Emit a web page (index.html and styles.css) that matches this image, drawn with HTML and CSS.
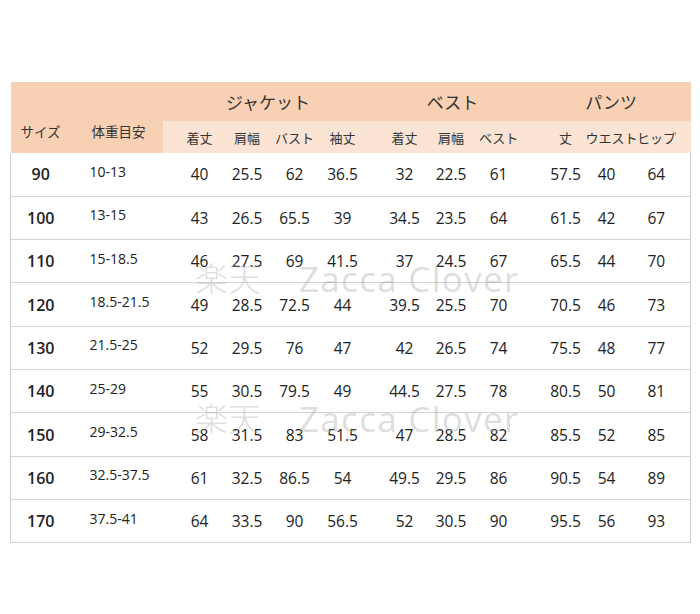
FILE: index.html
```html
<!DOCTYPE html>
<html lang="ja">
<head>
<meta charset="utf-8">
<link rel="stylesheet" href="styles.css">
</head>
<body>
<div class="wrap">
<table class="size-table">
  <colgroup>
    <col class="w-size"><col class="w-weight">
    <col class="w-j1"><col class="w-j2"><col class="w-j3"><col class="w-j4">
    <col class="w-v1"><col class="w-v2"><col class="w-v3">
    <col class="w-p1"><col class="w-p2"><col class="w-p3">
  </colgroup>
  <thead>
    <tr class="group-row">
      <th rowspan="2" class="corner c1">サイズ</th>
      <th rowspan="2" class="corner c2">体重目安</th>
      <th colspan="4" class="group">ジャケット</th>
      <th colspan="3" class="group">ベスト</th>
      <th colspan="3" class="group">パンツ</th>
    </tr>
    <tr class="sub-row">
      <th class="c3">着丈</th><th class="c4">肩幅</th><th class="c5">バスト</th><th class="c6">袖丈</th>
      <th class="c7">着丈</th><th class="c8">肩幅</th><th class="c9">ベスト</th>
      <th class="c10">丈</th><th class="c11">ウエスト</th><th class="c12">ヒップ</th>
    </tr>
  </thead>
  <tbody>
    <tr><td class="c1">90</td><td class="c2">10-13</td><td class="c3">40</td><td class="c4">25.5</td><td class="c5">62</td><td class="c6">36.5</td><td class="c7">32</td><td class="c8">22.5</td><td class="c9">61</td><td class="c10">57.5</td><td class="c11">40</td><td class="c12">64</td></tr>
    <tr><td class="c1">100</td><td class="c2">13-15</td><td class="c3">43</td><td class="c4">26.5</td><td class="c5">65.5</td><td class="c6">39</td><td class="c7">34.5</td><td class="c8">23.5</td><td class="c9">64</td><td class="c10">61.5</td><td class="c11">42</td><td class="c12">67</td></tr>
    <tr><td class="c1">110</td><td class="c2">15-18.5</td><td class="c3">46</td><td class="c4">27.5</td><td class="c5">69</td><td class="c6">41.5</td><td class="c7">37</td><td class="c8">24.5</td><td class="c9">67</td><td class="c10">65.5</td><td class="c11">44</td><td class="c12">70</td></tr>
    <tr><td class="c1">120</td><td class="c2">18.5-21.5</td><td class="c3">49</td><td class="c4">28.5</td><td class="c5">72.5</td><td class="c6">44</td><td class="c7">39.5</td><td class="c8">25.5</td><td class="c9">70</td><td class="c10">70.5</td><td class="c11">46</td><td class="c12">73</td></tr>
    <tr><td class="c1">130</td><td class="c2">21.5-25</td><td class="c3">52</td><td class="c4">29.5</td><td class="c5">76</td><td class="c6">47</td><td class="c7">42</td><td class="c8">26.5</td><td class="c9">74</td><td class="c10">75.5</td><td class="c11">48</td><td class="c12">77</td></tr>
    <tr><td class="c1">140</td><td class="c2">25-29</td><td class="c3">55</td><td class="c4">30.5</td><td class="c5">79.5</td><td class="c6">49</td><td class="c7">44.5</td><td class="c8">27.5</td><td class="c9">78</td><td class="c10">80.5</td><td class="c11">50</td><td class="c12">81</td></tr>
    <tr><td class="c1">150</td><td class="c2">29-32.5</td><td class="c3">58</td><td class="c4">31.5</td><td class="c5">83</td><td class="c6">51.5</td><td class="c7">47</td><td class="c8">28.5</td><td class="c9">82</td><td class="c10">85.5</td><td class="c11">52</td><td class="c12">85</td></tr>
    <tr><td class="c1">160</td><td class="c2">32.5-37.5</td><td class="c3">61</td><td class="c4">32.5</td><td class="c5">86.5</td><td class="c6">54</td><td class="c7">49.5</td><td class="c8">29.5</td><td class="c9">86</td><td class="c10">90.5</td><td class="c11">54</td><td class="c12">89</td></tr>
    <tr><td class="c1">170</td><td class="c2">37.5-41</td><td class="c3">64</td><td class="c4">33.5</td><td class="c5">90</td><td class="c6">56.5</td><td class="c7">52</td><td class="c8">30.5</td><td class="c9">90</td><td class="c10">95.5</td><td class="c11">56</td><td class="c12">93</td></tr>
  </tbody>
</table>
<div class="watermark wm1"><span class="wm-jp">楽天</span><span class="wm-en">Zacca Clover</span></div>
<div class="watermark wm2"><span class="wm-jp">楽天</span><span class="wm-en">Zacca Clover</span></div>
</div>
</body>
</html>
```
FILE: styles.css
```css
html, body {
  margin: 0;
  padding: 0;
  background: #ffffff;
}
body {
  width: 700px;
  height: 614px;
  overflow: hidden;
  font-family: "Open Sans", "Noto Sans CJK JP", sans-serif;
  color: #222;
}
.wrap {
  position: relative;
  padding: 82px 0 0 10px;
}
.size-table {
  border-collapse: collapse;
  table-layout: fixed;
  width: 680px;
}
.w-size { width: 60px; }
.w-weight { width: 92px; }
.w-j1 { width: 61px; }
.w-j2 { width: 47px; }
.w-j3 { width: 48px; }
.w-j4 { width: 55px; }
.w-v1 { width: 54px; }
.w-v2 { width: 47px; }
.w-v3 { width: 57px; }
.w-p1 { width: 54px; }
.w-p2 { width: 46px; }
.w-p3 { width: 59px; }

th {
  font-family: "Noto Sans CJK JP", sans-serif;
  font-weight: 400;
  color: #333;
  padding: 0;
  white-space: nowrap;
}
.group-row { height: 39px; }
.group-row th { background: #f8d0b3; }
.group {
  font-size: 17px;
  text-align: center;
  vertical-align: middle;
}
.corner {
  font-size: 13.5px;
  vertical-align: top;
  padding-top: 40px;
  line-height: 18px;
}
.corner.c1 { text-align: center; }
.corner.c2 { text-align: left; padding-left: 21px; }
.sub-row { height: 32px; }
.sub-row th {
  background: #fbe4d4;
  font-size: 13px;
  text-align: center;
  vertical-align: middle;
}

tbody tr { height: 43.33px; }
td {
  padding: 0;
  text-align: center;
  vertical-align: middle;
  font-size: 15.5px;
  border-bottom: 1px solid #d4d4d4;
  white-space: nowrap;
}
tbody td:first-child { border-left: 1px solid #cfcfcf; }
tbody td:last-child { border-right: 1px solid #cfcfcf; }
td.c1 { font-weight: 600; font-size: 16px; }
td.c2 { text-align: left; padding-left: 19px; font-size: 14px; padding-bottom: 6px; }

.c3 { padding-left: 13px; }
.c6 { padding-right: 7px; }
.c7 { padding-left: 8px; }
.c9 { padding-right: 9px; }
.c10 { padding-left: 14px; }
.c11 { padding-right: 4px; }
.c12 { padding-right: 9px; }

.watermark {
  position: absolute;
  left: 195px;
  display: flex;
  gap: 38px;
  font-family: "Open Sans", "Noto Sans CJK JP", sans-serif;
  font-size: 35px;
  color: rgba(160, 160, 160, 0.36);
  white-space: nowrap;
  line-height: 1;
  pointer-events: none;
}
.wm-jp { font-family: "Noto Sans CJK JP", sans-serif; font-size: 33px; font-weight: 300; }
.wm-en { letter-spacing: 1.3px; }
.wm1 { top: 261px; }
.wm2 { top: 401px; }
```
